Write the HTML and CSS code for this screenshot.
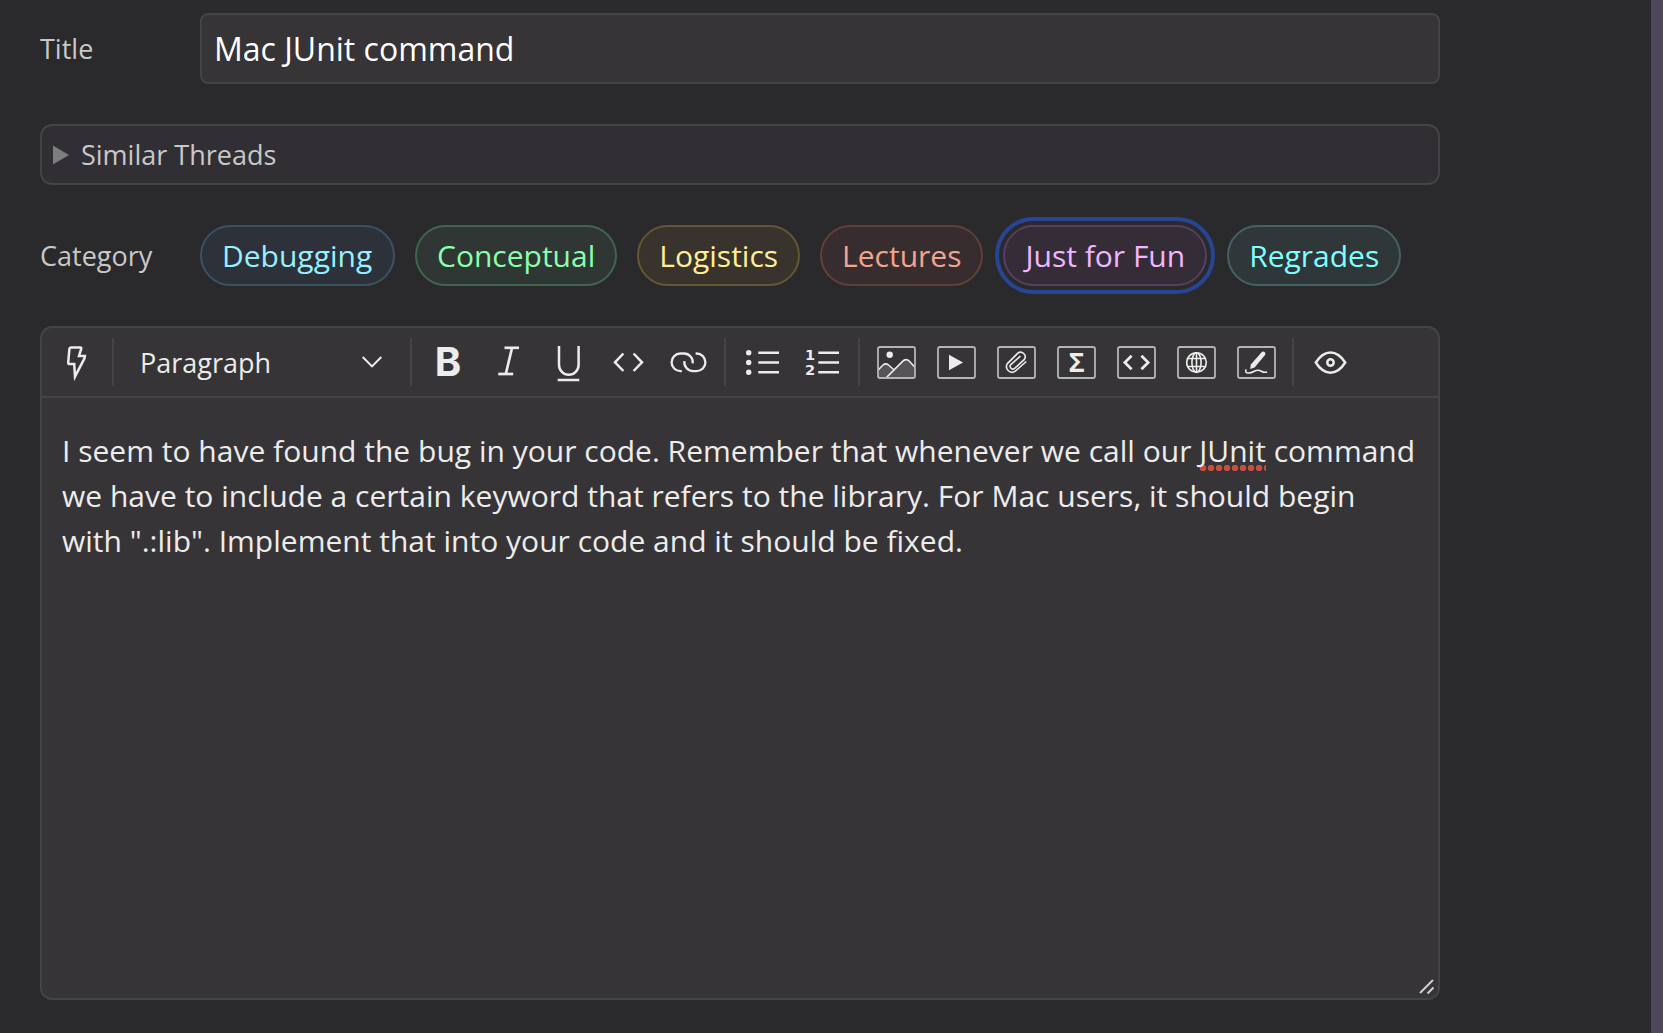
FILE: index.html
```html
<!DOCTYPE html>
<html lang="en">
<head>
<meta charset="utf-8">
<title>New Thread</title>
<link rel="stylesheet" href="styles.css">
</head>
<body>
<main class="form">
  <div class="row title-row">
    <label class="label">Title</label>
    <div class="title-input">Mac JUnit command</div>
  </div>
  <div class="similar">
    <svg class="disclosure" viewBox="0 0 17 20"><path d="M0 0.5L16 10L0 19.5Z"/></svg>
    <span class="similar-text">Similar Threads</span>
  </div>
  <div class="row category-row">
    <span class="label">Category</span>
    <div class="pills">
      <span class="pill debugging">Debugging</span>
      <span class="pill conceptual">Conceptual</span>
      <span class="pill logistics">Logistics</span>
      <span class="pill lectures">Lectures</span>
      <span class="pill fun selected">Just for Fun</span>
      <span class="pill regrades">Regrades</span>
    </div>
  </div>
  <section class="editor">
    <div class="toolbar">
      <div class="group">
        <svg class="icon" viewBox="-30 -24 60 48"><path class="w25" d="M-5-14.5H4.2Q5.6-14.5 5.2-13.1L3-6H8.9L8.6-3.8L-1 14.6L-1.8 2H-6.2Q-7.8 2-7.8 0.4L-6.6-13Q-6.4-14.5-5-14.5Z"/></svg>
      </div>
      <div class="group select">
        <span class="select-text">Paragraph</span>
        <svg class="chevron" viewBox="-12 -24 24 48"><path class="w2" d="M-9.3-5L0 4.4L9.3-5"/></svg>
      </div>
      <div class="group">
        <svg class="icon" viewBox="-30 -24 60 48"><text class="bold" x="-13.3" y="13.5">B</text></svg>
        <svg class="icon" viewBox="-30 -24 60 48"><line class="w26" x1="-3.5" y1="-14.2" x2="11" y2="-14.2"/><line class="w26" x1="4" y1="-14" x2="-2.2" y2="12"/><line class="w26" x1="-9.8" y1="12" x2="5.2" y2="12"/></svg>
        <svg class="icon" viewBox="-30 -24 60 48"><path class="w25" d="M-9-16V3a9.8 9.8 0 0 0 19.6 0V-16"/><line class="w25" x1="-10.3" y1="18" x2="11.3" y2="18"/></svg>
        <svg class="icon" viewBox="-30 -24 60 48"><path class="w25" d="M-4.6-8.5L-13 0.3L-4.6 9M5.6-8.5L14 0.3L5.6 9"/></svg>
        <svg class="icon" viewBox="-30 -24 60 48"><path class="w22" d="M-6.2 9.1H-7.6A8.8 8.8 0 0 1-7.6-8.5H-4A8.7 8.7 0 0 1 4.7 1.4M7.6-8.5H8.6A8.8 8.8 0 0 1 8.6 9.1H5A8.7 8.7 0 0 1-3.6-0.8"/></svg>
      </div>
      <div class="group">
        <svg class="icon" viewBox="-30 -24 60 48"><circle class="solid" cx="-13.3" cy="-9.3" r="2.7"/><circle class="solid" cx="-13.3" cy="0.5" r="2.7"/><circle class="solid" cx="-13.3" cy="10.3" r="2.7"/><path class="w25" d="M-3.7-9.3H17M-3.7 0.5H17M-3.7 10.3H17"/></svg>
        <svg class="icon" viewBox="-30 -24 60 48"><text class="digit" x="-17" y="-1.7">1</text><text class="digit" x="-17" y="13">2</text><path class="w25" d="M-3.7-9.3H17M-3.7 0.5H17M-3.7 10.3H17"/></svg>
      </div>
      <div class="group">
        <svg class="icon" viewBox="-30 -24 60 48"><path class="hill" d="M-18 8.2L-13 3Q-10.3 0.6-7.5 3L-2.4 7.5L6.3-0.4Q9.8-4 13.4-0.8L18.7 5V16H-18Z"/><path class="w16" d="M-18 8.2L-13 3Q-10.3 0.6-7.5 3L-2.4 7.5M-10 16L6.3-0.4Q9.8-4 13.4-0.8L18.7 5"/><circle class="solid" cx="-6.3" cy="-7.3" r="3.2"/><rect class="frame" x="-18" y="-15" width="37" height="31" rx="2"/></svg>
        <svg class="icon" viewBox="-30 -24 60 48"><rect class="frame" x="-18" y="-15" width="37" height="31" rx="2"/><path class="solid" d="M-7-7.2L7 0.5L-7 8.3Z"/></svg>
        <svg class="icon" viewBox="-30 -24 60 48"><rect class="frame" x="-18" y="-15" width="37" height="31" rx="2"/><path class="w16" d="M10.3-0.5L-1 9.4A5.6 5.6 0 0 1-8.6 1.6L1.8-8.8A4.6 4.6 0 0 1 8.4-2.6L-1.4 6.4A2.7 2.7 0 0 1-5.2 2.6L4.4-5.8"/></svg>
        <svg class="icon" viewBox="-30 -24 60 48"><rect class="frame" x="-18" y="-15" width="37" height="31" rx="2"/><text class="sigma" x="0.8" y="10.2">Σ</text></svg>
        <svg class="icon" viewBox="-30 -24 60 48"><rect class="frame" x="-18" y="-15" width="37" height="31" rx="2"/><path class="w26" d="M-4.4-6.2L-11.2 0.5L-4.4 7.2M5.4-6.2L12.2 0.5L5.4 7.2"/></svg>
        <svg class="icon" viewBox="-30 -24 60 48"><rect class="frame" x="-18" y="-15" width="37" height="31" rx="2"/><circle class="w16" cx="0.5" cy="0.5" r="9.8"/><ellipse class="w16" cx="0.5" cy="0.5" rx="4.6" ry="9.8"/><path class="w16" d="M-8.6-3.5H9.6M-8.6 4.5H9.6M0.5-9.3V10.3"/></svg>
        <svg class="icon" viewBox="-30 -24 60 48"><rect class="frame" x="-18" y="-15" width="37" height="31" rx="2"/><path class="solid" d="M5.4-9.6Q7.4-11.2 8.9-9.8Q10-8.5 8.8-6.7L-1.4 5.6L-5.9 7L-5.2 2.4Z"/><path class="w16" d="M-9.8 7.4Q-11.4 10.6-8.2 11Q-5 11.2-1.8 9.2Q2.2 7.3 5.4 9.2Q8 10.8 11.2 10"/></svg>
      </div>
      <div class="group last">
        <svg class="icon" viewBox="-30 -24 60 48"><path class="w25" d="M-14.2 0.5C-5.8-13 6.8-13 15.2 0.5C6.8 14-5.8 14-14.2 0.5Z"/><circle class="w25" cx="0.5" cy="0.5" r="3.2"/></svg>
      </div>
    </div>
    <div class="content">I seem to have found the bug in your code. Remember that whenever we call our <span class="misspelled">JUnit</span> command we have to include a certain keyword that refers to the library. For Mac users, it should begin with ".:lib". Implement that into your code and it should be fixed.</div>
    <svg class="grip" viewBox="0 0 16 16"><path d="M1 14L14 1M8.5 14.5L14.5 8.5"/></svg>
  </section>
</main>
<aside class="edge"></aside>
</body>
</html>
```
FILE: styles.css
```css
* { box-sizing: border-box; }
body {
  margin: 0;
  height: 1033px;
  display: flex;
  justify-content: space-between;
  background: #2a2a2c;
  font-family: "Open Sans", sans-serif;
  color: #ececec;
  overflow: hidden;
}
.form { width: 1440px; padding: 13px 0 0 40px; }
.edge { width: 12px; background: #4e465a; }
.row { display: flex; align-items: center; }
.label { width: 160px; flex: none; font-size: 27px; color: #c8c8c8; }
.title-input {
  flex: 1;
  height: 71px;
  padding: 0 12px;
  border: 2px solid #444346;
  border-radius: 8px;
  background: #373437;
  color: #fff;
  font-size: 32px;
  line-height: 68px;
}
.similar {
  display: flex;
  align-items: center;
  gap: 11px;
  height: 61px;
  margin: 40px 0;
  padding-left: 11px;
  border: 2px solid #444346;
  border-radius: 12px;
  background: #322f34;
  font-size: 27px;
  color: #c8c8c8;
}
.disclosure { width: 17px; height: 20px; fill: #7d7c7f; }
.pills { display: flex; gap: 20px; }
.pill {
  height: 61px;
  padding: 0 20px;
  border: 2px solid;
  border-radius: 31px;
  font-size: 30px;
  line-height: 58px;
  white-space: nowrap;
}
.pill:first-child { padding-right: 20.8px; }
.debugging { color: #99eeff; background: #2d313a; border-color: #3b5263; }
.conceptual { color: #88ffa8; background: #303634; border-color: #3f6750; }
.logistics { color: #ffee99; background: #38332d; border-color: #655732; }
.lectures { color: #f2a48e; background: #382d2e; border-color: #673d3a; }
.fun { color: #f3b5ff; background: #342d37; border-color: #573f61; }
.regrades { color: #80ffff; background: #303739; border-color: #456265; }
.selected { outline: 4px solid #284594; outline-offset: 4px; }
.editor {
  position: relative;
  height: 674px;
  margin-top: 40px;
  border: 2px solid #444346;
  border-radius: 12px;
  background: #373437;
}
.toolbar {
  display: flex;
  align-items: center;
  height: 70px;
  border-bottom: 2px solid #444346;
}
.group {
  display: flex;
  height: 48px;
  padding: 0 6px;
  border-right: 2px solid #444346;
}
.group:first-child { padding-left: 4px; }
.last { border-right: none; }
.icon { width: 60px; height: 48px; }
.icon path, .icon line, .icon circle, .icon ellipse, .icon rect, .chevron path {
  fill: none;
  stroke: #ececec;
}
.select { width: 298px; padding: 0 26px; justify-content: space-between; align-items: center; }
.select-text { font-size: 27px; }
.chevron { width: 24px; height: 48px; }
.w16 { stroke-width: 1.6; }
.w2 { stroke-width: 2; }
.w22 { stroke-width: 2.3; }
.w25 { stroke-width: 2.5; }
.w26 { stroke-width: 2.7; }
.icon .solid { fill: #ececec; stroke: none; }
.icon .frame { stroke: #b4b3b5; stroke-width: 1.8; }
.icon .hill { fill: #565457; stroke: none; }
.icon text { fill: #ececec; }
.bold { font: 700 40px Inter, sans-serif; }
.digit { font: 700 14.5px "DejaVu Sans", sans-serif; }
.sigma { font: 700 27px "Open Sans", sans-serif; text-anchor: middle; }
.content { padding: 30px 20px; font-size: 30px; line-height: 45px; letter-spacing: 0.01px; }
.misspelled {
  background: radial-gradient(circle at 4px 3px, #c74e3f 3px, transparent 3.6px) 0 100% / 8px 6px repeat-x;
}
.grip {
  position: absolute;
  right: 3px;
  bottom: 3px;
  width: 16px;
  height: 16px;
  fill: none;
  stroke: #cfcfcf;
  stroke-width: 2;
}
```
